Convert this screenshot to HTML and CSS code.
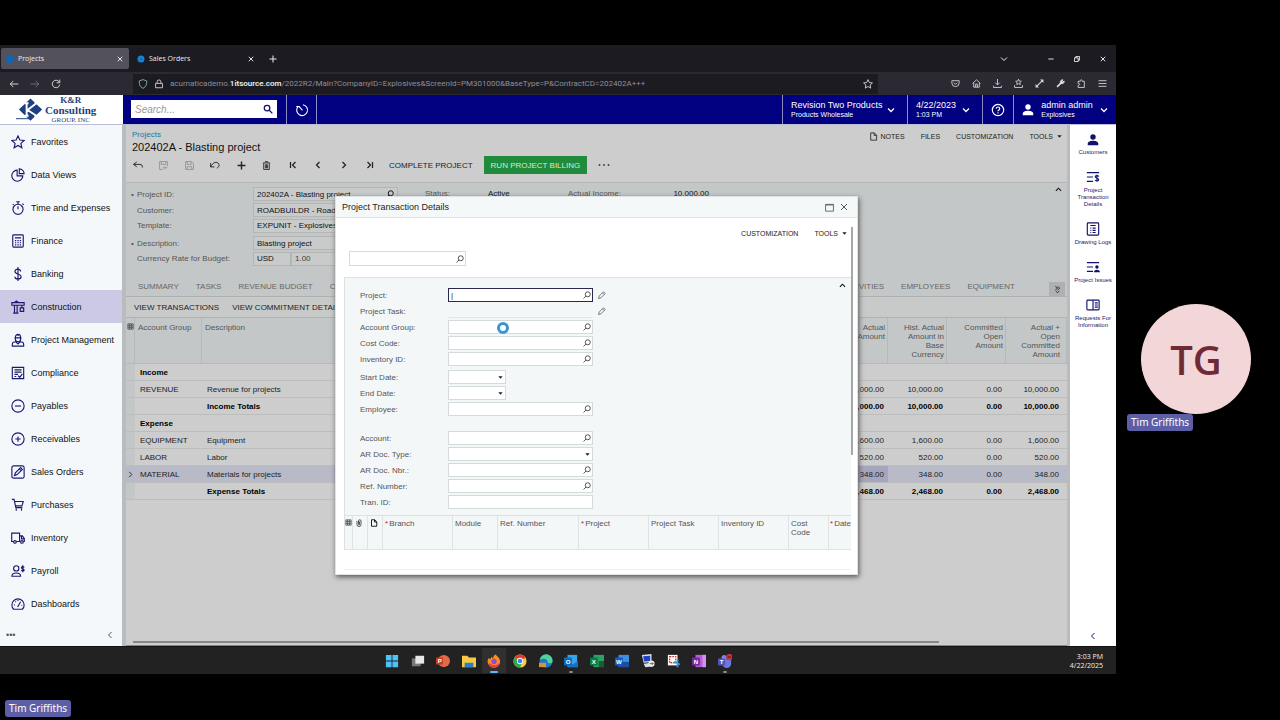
FILE: index.html
```html
<!DOCTYPE html>
<html lang="en">
<head>
<meta charset="utf-8">
<title>Project Transaction Details</title>
<link rel="stylesheet" href="styles.css">
</head>
<body>
<svg class="sprite" aria-hidden="true">
  <symbol id="chev-down" viewBox="0 0 16 16"><path d="M2 5l6 6 6-6"/></symbol>
  <symbol id="chev-up" viewBox="0 0 16 16"><path d="M2 11l6-6 6 6"/></symbol>
  <symbol id="chev-left" viewBox="0 0 16 16"><path d="M11 2L5 8l6 6"/></symbol>
  <symbol id="chev-right" viewBox="0 0 16 16"><path d="M5 2l6 6-6 6"/></symbol>
  <symbol id="first" viewBox="0 0 16 16"><path d="M3 2v12M13 2L7 8l6 6"/></symbol>
  <symbol id="last" viewBox="0 0 16 16"><path d="M13 2v12M3 2l6 6-6 6"/></symbol>
  <symbol id="close" viewBox="0 0 16 16"><path d="M2 2l12 12M14 2L2 14"/></symbol>
  <symbol id="plus" viewBox="0 0 16 16"><path d="M8 1v14M1 8h14"/></symbol>
  <symbol id="lookup" viewBox="0 0 16 16"><circle cx="9.500" cy="6.500" r="5"/><path d="M6 10l-5 5"/></symbol>
  <symbol id="pencil" viewBox="0 0 16 16"><path d="M1 15l1.500-5L11 1.500 14.500 5 6 13.500zM9 3.500L12.500 7"/></symbol>
  <symbol id="caret" viewBox="0 0 16 16"><path d="M3 5h10l-5 6z" fill="currentColor" stroke="none"/></symbol>
  <symbol id="person" viewBox="0 0 16 16"><circle cx="8" cy="4" r="3.600" fill="currentColor" stroke="none"/><path d="M1 15v-2c0-3 4-4 7-4s7 1 7 4v2z" fill="currentColor" stroke="none"/></symbol>
  <symbol id="page" viewBox="0 0 16 16"><path d="M3 1.500h6.500L13.500 6v8.500H3zM9 1.500V6h4.500"/></symbol>
  <symbol id="grid" viewBox="0 0 16 16"><path d="M2 2h12v12H2zM2 6h12M2 10h12M6 2v12M10 2v12"/></symbol>
  <symbol id="clip" viewBox="0 0 16 16"><path d="M4 4v7a4 4 0 0 0 8 0V4a2.500 2.500 0 0 0-5 0v7a1 1 0 0 0 2 0V5"/></symbol>
  <symbol id="star" viewBox="0 0 16 16"><path d="M8 1l2.100 4.700 5 .5-3.800 3.400 1.100 5L8 12l-4.400 2.600 1.100-5L.9 6.200l5-.5z"/></symbol>
</svg>

<main class="call">
  <section class="desktop">
    <div class="tabstrip">
      <div class="tab tab-on"><svg class="fav"><circle cx="4" cy="4" r="4"/></svg><span>Projects</span><button aria-label="Close tab"><svg class="i i6"><use href="#close"/></svg></button></div>
      <div class="tab"><svg class="fav"><circle class="fav-ring" cx="4" cy="4" r="2"/></svg><span>Sales Orders</span><button aria-label="Close tab"><svg class="i i6"><use href="#close"/></svg></button></div>
      <button class="newtab" aria-label="New tab"><svg class="i i8"><use href="#plus"/></svg></button>
      <div class="winbtns">
        <button aria-label="List tabs"><svg class="i i8"><use href="#chev-down"/></svg></button>
        <button aria-label="Minimize"><svg class="i i6" viewBox="0 0 16 16"><path d="M1 8h14"/></svg></button>
        <button aria-label="Restore"><svg class="i i6" viewBox="0 0 16 16"><path d="M1 5h10v10H1zM5 5V1h10v10h-4"/></svg></button>
        <button aria-label="Close"><svg class="i i6"><use href="#close"/></svg></button>
      </div>
    </div>

    <div class="navbar">
      <div class="navleft">
        <button aria-label="Back"><svg class="i i10" viewBox="0 0 16 16"><path d="M15 8H2M7 3L2 8l5 5"/></svg></button>
        <button class="dim" aria-label="Forward"><svg class="i i10" viewBox="0 0 16 16"><path d="M1 8h13M9 3l5 5-5 5"/></svg></button>
        <button aria-label="Reload"><svg class="i i10" viewBox="0 0 16 16"><path d="M13 4.500A6 6 0 1 0 14 9M14 1v5H9"/></svg></button>
      </div>
      <div class="url">
        <svg class="i i10 shield" viewBox="0 0 16 16"><path d="M8 1l6 2c0 6-1 9.500-6 12C3 12.500 2 9 2 3z"/></svg>
        <svg class="i i10" viewBox="0 0 16 16"><path d="M2.500 7h11v7h-11zM5 7V4.500a3 3 0 0 1 6 0V7"/></svg>
        <span>acumaticademo.<b>1itsource.com</b>/2022R2/Main?CompanyID=Explosives&amp;ScreenId=PM301000&amp;BaseType=P&amp;ContractCD=202402A+++</span>
        <svg class="i i10 urlstar"><use href="#star"/></svg>
      </div>
      <div class="navright">
        <button aria-label="Pocket"><svg class="i i9" viewBox="0 0 16 16"><path d="M1.500 3h13v4a6.500 6.500 0 0 1-13 0zM5 6.500l3 3 3-3"/></svg></button>
        <button aria-label="Home"><svg class="i i9" viewBox="0 0 16 16"><path d="M1 8l7-6.500L15 8M3 7v7.500h10V7M6.500 14.500V9h3v5.500"/></svg></button>
        <button aria-label="Downloads"><svg class="i i9" viewBox="0 0 16 16"><path d="M8 0v10M4 6.500l4 4 4-4M1 12v3h14v-3"/></svg></button>
        <button aria-label="Bookmarks"><svg class="i i9" viewBox="0 0 16 16"><path d="M8 .5l1.500 3.200 3.500.4-2.600 2.300.7 3.400L8 8.200 4.900 9.800l.7-3.400L3 4.100l3.500-.4zM1 11v4h14v-4"/></svg></button>
        <button aria-label="Expand"><svg class="i i9" viewBox="0 0 16 16"><path d="M3 13L13 3" stroke-width="2"/><path d="M9 1h6v6zM1 9v6h6z" fill="currentColor" stroke="none"/></svg></button>
        <button aria-label="Tools"><svg class="i i9" viewBox="0 0 16 16"><path d="M2 14l7-7" stroke-width="3"/><path d="M8 7a4 4 0 0 1 4.500-5.500L10.500 4l1.500 1.500L14.500 3.500A4 4 0 0 1 9 8z" fill="currentColor"/></svg></button>
        <button aria-label="Extensions"><svg class="i i9" viewBox="0 0 16 16"><path d="M2 4h4c-1-3.500 4-3.500 3 0h4v11H2v-4c3.500 1 3.500-4 0-3z"/></svg></button>
        <button aria-label="Menu"><svg class="i i9" viewBox="0 0 16 16"><path d="M1 3h14M1 8h14M1 13h14"/></svg></button>
      </div>
    </div>

    <header class="apphead">
      <div class="logo">
        <svg class="logomark" viewBox="0 0 30 24"><path d="M15 0l12 11.500L15 23 3 11.500z" fill="#1f3f80"/><path d="M0 21h16" stroke="#1f3f80" fill="none"/><path d="M11 5v13M9 5h4M9 18h4M21 5l-9 7 9 6M19 5h4M19 18h4" stroke="#fff" stroke-width="2" fill="none"/></svg>
        <div class="logotext"><b class="kr">K&amp;R</b><b>Consulting</b><small>GROUP, INC</small></div>
      </div>
      <label class="search"><input type="text" placeholder="Search..." aria-label="Search"><svg class="i i10" viewBox="0 0 16 16"><circle cx="6.500" cy="6.500" r="4.500"/><path d="M10 10l5 5"/></svg></label>
      <button class="recent" aria-label="Recent"><svg class="i i14" viewBox="0 0 16 16"><path d="M9 2a6.200 6.200 0 1 1-5.500 2M8.500 8.500L5 4.500M1.500 4h4"/></svg></button>
      <span class="grow"></span>
      <button class="hb hb-company"><span><em>Revision Two Products</em><small>Products Wholesale</small></span><svg class="i i8"><use href="#chev-down"/></svg></button>
      <button class="hb hb-date"><span><em>4/22/2023</em><small>1:03 PM</small></span><svg class="i i8"><use href="#chev-down"/></svg></button>
      <button class="hb hb-help" aria-label="Help"><svg class="i i14" viewBox="0 0 16 16"><circle cx="8" cy="8" r="6.500"/><path d="M6 6.500c0-2.800 4-2.500 4 0C10 8 8 8 8 9.500M8 10.500V12"/></svg></button>
      <button class="hb hb-user"><svg class="i i12"><use href="#person"/></svg><span><em>admin admin</em><small>Explosives</small></span><svg class="i i8"><use href="#chev-down"/></svg></button>
    </header>

    <div class="appbody">
      <nav class="side">
        <a href="#"><svg class="i i14"><use href="#star"/></svg>Favorites</a>
        <a href="#"><svg class="i i14" viewBox="0 0 16 16"><path d="M7 2.500A6.300 6.300 0 1 0 13.500 9H7zM9.500 1v5.500H15A5.500 5.500 0 0 0 9.500 1z"/></svg>Data Views</a>
        <a href="#"><svg class="i i14" viewBox="0 0 16 16"><circle cx="8" cy="9.500" r="5.800"/><path d="M8 9.500V6M6 .8h4M8 1v3M13 3l1.500 1.500M2 4.500L3 3.500"/></svg>Time and Expenses</a>
        <a href="#"><svg class="i i14" viewBox="0 0 16 16"><rect x="2" y="1" width="12" height="14" rx="1"/><path d="M4.500 4.500h7M4.500 7.500h1.500M7.300 7.500h1.500M10 7.500h1.500M4.500 10h1.500M7.300 10h1.500M10 10h1.500M4.500 12.500h1.500M7.300 12.500h1.500M10 12.500h1.500"/></svg>Finance</a>
        <a href="#"><svg class="i i14" viewBox="0 0 16 16"><path d="M11 5c0-3.500-6.500-3.500-6.500 0 0 3.500 7 2.500 7 6s-7 3.500-7 0M8 0v16"/></svg>Banking</a>
        <a href="#" class="on"><svg class="i i14" viewBox="0 0 16 16"><path d="M1 3h14v3H1zM4 6v9M7 6v9M2.500 15h6M4 3l2-2 3 2M12.500 6v3M10.500 9h4v4h-4z"/></svg>Construction</a>
        <a href="#"><svg class="i i14" viewBox="0 0 16 16"><path d="M4 5.500h8M5 5a3 3.500 0 0 1 6 0v2a3 3 0 0 1-6 0zM1.500 15v-2c0-2 2-3 4-3l2.500 2.500L10.500 10c2 0 4 1 4 3v2zM8 1v2.500"/></svg>Project Management</a>
        <a href="#"><svg class="i i14" viewBox="0 0 16 16"><path d="M1.500 1.500h13v13h-13zM4 4.500h8M4 7h8M4 9.500h4M4 12h2M8 11l2 2 3-4"/></svg>Compliance</a>
        <a href="#"><svg class="i i14" viewBox="0 0 16 16"><circle cx="8" cy="8" r="7"/><path d="M4.500 8h7"/></svg>Payables</a>
        <a href="#"><svg class="i i14" viewBox="0 0 16 16"><circle cx="8" cy="8" r="7"/><path d="M5 8h6M8 5v6"/></svg>Receivables</a>
        <a href="#"><svg class="i i14" viewBox="0 0 16 16"><rect x="1" y="1" width="14" height="14" rx="2"/><path d="M4 12l1-3 6-6 2 2-6 6zM9.500 4.500l2 2"/></svg>Sales Orders</a>
        <a href="#"><svg class="i i14" viewBox="0 0 16 16"><path d="M1 1.500h2.500L5.500 11H13M4 4h10l-1.500 5H5M6 12v2.500M12 12v2.500"/></svg>Purchases</a>
        <a href="#"><svg class="i i14" viewBox="0 0 16 16"><path d="M3 12H.8V2.500h9V12H6M9.800 5.500H13l2.200 3V12H14M9.800 12h1.200M12 6v3h3"/><circle cx="4.500" cy="12.500" r="1.500"/><circle cx="12.500" cy="12.500" r="1.500"/></svg>Inventory</a>
        <a href="#"><svg class="i i14" viewBox="0 0 16 16"><circle cx="6" cy="5" r="3"/><path d="M1 14c0-5 10-5 10 0zM15 4c-.5-1.500-3-1.200-3 .3 0 1.600 3 .9 3 2.500 0 1.500-2.700 1.600-3.200.1M13.500 1.500v8"/></svg>Payroll</a>
        <a href="#"><svg class="i i14" viewBox="0 0 16 16"><path d="M3 14a7 7 0 1 1 10 0zM7.500 11.500L11 5.500M3.500 9h1M5 5l.8.8M12 9.500h.8M8 3.500v1"/></svg>Dashboards</a>
        <div class="sidefoot"><button aria-label="More">•••</button><button aria-label="Collapse menu"><svg class="i i8"><use href="#chev-left"/></svg></button></div>
      </nav>

      <section class="main">
        <div class="titlebar">
          <div><a href="#">Projects</a><h1>202402A - Blasting project</h1></div>
          <div class="toplinks"><button><svg class="i i9"><use href="#page"/></svg>NOTES</button><button>FILES</button><button>CUSTOMIZATION</button><button>TOOLS<svg class="i i7"><use href="#caret"/></svg></button></div>
        </div>
        <div class="toolbar">
          <div class="tools">
            <button aria-label="Back"><svg class="i i10" viewBox="0 0 16 16"><path d="M6 3L1 7l5 4M1 7h10c3 0 4 1.500 4 5"/></svg></button>
            <button class="off" aria-label="Save and close"><svg class="i i9" viewBox="0 0 16 16"><path d="M7 15H1V1h14v8M4 1v5h8V1M8 12h7M11 9l-3 3 3 3"/></svg></button>
            <button class="off" aria-label="Save"><svg class="i i9" viewBox="0 0 16 16"><path d="M1 1h11l3 3v11H1zM4 1v5h7V1M4 15v-5h8v5"/></svg></button>
            <button aria-label="Undo"><svg class="i i10" viewBox="0 0 16 16"><path d="M1 5v6h6M1 11C4 5 9 2 13 5c3 3 1 7-2 8"/></svg></button>
            <button aria-label="Add"><svg class="i i9 bold"><use href="#plus"/></svg></button>
            <button aria-label="Delete"><svg class="i i9" viewBox="0 0 16 16"><path d="M1.500 3.500h13M6 3V1h4v2M3 4v11h10V4M6 6v7M8 6v7M10 6v7"/></svg></button>
            <button aria-label="First"><svg class="i i8 bold"><use href="#first"/></svg></button>
            <button aria-label="Previous"><svg class="i i8 bold"><use href="#chev-left"/></svg></button>
            <button aria-label="Next"><svg class="i i8 bold"><use href="#chev-right"/></svg></button>
            <button aria-label="Last"><svg class="i i8 bold"><use href="#last"/></svg></button>
          </div>
          <button>COMPLETE PROJECT</button>
          <button class="go">RUN PROJECT BILLING</button>
          <button aria-label="More actions"><svg class="i i12" viewBox="0 0 16 16"><path d="M1 8h2M7 8h2M13 8h2" stroke-width="2"/></svg></button>
        </div>

        <div class="panel">
          <div class="pform">
            <label class="req" for="f1">Project ID:</label><span class="fld"><input id="f1" value="202402A - Blasting project"><svg class="i i8"><use href="#lookup"/></svg></span>
            <label for="f2">Customer:</label><span class="fld"><input id="f2" value="ROADBUILDR - Road Builders"></span>
            <label for="f3">Template:</label><span class="fld"><input id="f3" value="EXPUNIT - Explosives Unit"></span>
            <label class="req gap" for="f4">Description:</label><span class="fld gap"><input id="f4" value="Blasting project"></span>
            <label for="f5">Currency Rate for Budget:</label><span class="pair"><span class="fld"><input id="f5" value="USD"></span><span class="fld"><input class="rate" value="1.00" aria-label="Rate"></span></span>
          </div>
          <dl class="stats"><dt>Status:</dt><dd>Active</dd><dt>Actual Income:</dt><dd class="num">10,000.00</dd></dl>
          <button class="fold" aria-label="Collapse"><svg class="i i7 bold"><use href="#chev-up"/></svg></button>
        </div>

        <div class="tabs">
          <button>SUMMARY</button><button>TASKS</button><button>REVENUE BUDGET</button><button>COST BUDGET</button>
          <span class="grow"></span>
          <button>ACTIVITIES</button><button>EMPLOYEES</button><button>EQUIPMENT</button>
          <button class="more" aria-label="More tabs"><svg class="i i7" viewBox="0 0 16 16"><path d="M3 1l5 4-5 4M8 1l5 4-5 4M4 12l4 3 4-3"/></svg></button>
        </div>
        <div class="subbar"><button>VIEW TRANSACTIONS</button><button>VIEW COMMITMENT DETAILS</button></div>

        <table class="data">
          <colgroup><col class="c-sel"><col class="c-grp"><col><col class="c-num"><col class="c-num"><col class="c-num"><col class="c-last"></colgroup>
          <thead><tr><th><svg class="i i7"><use href="#grid"/></svg></th><th>Account Group</th><th>Description</th><th>Actual Amount</th><th>Hist. Actual Amount in Base Currency</th><th>Committed Open Amount</th><th>Actual + Open Committed Amount</th></tr></thead>
          <tbody>
            <tr class="sum"><td></td><td>Income</td><td></td><td></td><td></td><td></td><td></td></tr>
            <tr><td></td><td>REVENUE</td><td>Revenue for projects</td><td>10,000.00</td><td>10,000.00</td><td>0.00</td><td>10,000.00</td></tr>
            <tr class="sum"><td></td><td></td><td>Income Totals</td><td>10,000.00</td><td>10,000.00</td><td>0.00</td><td>10,000.00</td></tr>
            <tr class="sum"><td></td><td>Expense</td><td></td><td></td><td></td><td></td><td></td></tr>
            <tr><td></td><td>EQUIPMENT</td><td>Equipment</td><td>1,600.00</td><td>1,600.00</td><td>0.00</td><td>1,600.00</td></tr>
            <tr><td></td><td>LABOR</td><td>Labor</td><td>520.00</td><td>520.00</td><td>0.00</td><td>520.00</td></tr>
            <tr class="cur"><td><svg class="i i7"><use href="#chev-right"/></svg></td><td>MATERIAL</td><td>Materials for projects</td><td class="act">348.00</td><td>348.00</td><td>0.00</td><td>348.00</td></tr>
            <tr class="sum"><td></td><td></td><td>Expense Totals</td><td>2,468.00</td><td>2,468.00</td><td>0.00</td><td>2,468.00</td></tr>
          </tbody>
        </table>
        <div class="hscroll"><i></i></div>

        <div class="modal" role="dialog" aria-label="Project Transaction Details">
          <div class="mhead"><h2>Project Transaction Details</h2><button aria-label="Maximize"><svg class="i i9" viewBox="0 0 16 16"><path d="M1 2.500h14v12H1zM1 3.500h14"/></svg></button><button aria-label="Close"><svg class="i i8"><use href="#close"/></svg></button></div>
          <div class="mbody">
            <div class="mcontent">
              <div class="toplinks mlinks"><button>CUSTOMIZATION</button><button>TOOLS<svg class="i i7"><use href="#caret"/></svg></button></div>
              <span class="mfld mfind"><input aria-label="Find"><svg class="i i8"><use href="#lookup"/></svg></span>
              <div class="mpanel">
                <div class="mform">
                  <label for="m1">Project:</label><span class="mfld focus"><input id="m1" value="|"><svg class="i i8"><use href="#lookup"/></svg></span><button aria-label="Edit project"><svg class="i i8"><use href="#pencil"/></svg></button>
                  <label for="m2">Project Task:</label><span class="mfld ro"><input id="m2" disabled></span><button aria-label="Edit task"><svg class="i i8"><use href="#pencil"/></svg></button>
                  <label for="m3">Account Group:</label><span class="mfld"><input id="m3"><svg class="i i8"><use href="#lookup"/></svg></span>
                  <label for="m4">Cost Code:</label><span class="mfld"><input id="m4"><svg class="i i8"><use href="#lookup"/></svg></span>
                  <label for="m5">Inventory ID:</label><span class="mfld"><input id="m5"><svg class="i i8"><use href="#lookup"/></svg></span>
                </div>
                <div class="mform">
                  <label for="m6">Start Date:</label><span class="mfld short"><input id="m6"><svg class="i i7"><use href="#caret"/></svg></span>
                  <label for="m7">End Date:</label><span class="mfld short"><input id="m7"><svg class="i i7"><use href="#caret"/></svg></span>
                  <label for="m8">Employee:</label><span class="mfld"><input id="m8"><svg class="i i8"><use href="#lookup"/></svg></span>
                </div>
                <div class="mform apart">
                  <label for="m9">Account:</label><span class="mfld"><input id="m9"><svg class="i i8"><use href="#lookup"/></svg></span>
                  <label for="m10">AR Doc. Type:</label><span class="mfld"><select id="m10"><option></option></select><svg class="i i7"><use href="#caret"/></svg></span>
                  <label for="m11">AR Doc. Nbr.:</label><span class="mfld"><input id="m11"><svg class="i i8"><use href="#lookup"/></svg></span>
                  <label for="m12">Ref. Number:</label><span class="mfld"><input id="m12"><svg class="i i8"><use href="#lookup"/></svg></span>
                  <label for="m13">Tran. ID:</label><span class="mfld"><input id="m13"></span>
                </div>
                <button class="mfold" aria-label="Collapse"><svg class="i i7 bold"><use href="#chev-up"/></svg></button>
                <svg class="busy" viewBox="0 0 14 14"><circle cx="7" cy="7" r="4.500"/></svg>
              </div>
              <table class="mgrid">
                <colgroup><col class="g1"><col class="g2"><col class="g2"><col class="g3"><col class="g4"><col class="g5"><col class="g3"><col class="g3"><col class="g3"><col class="g6"><col></colgroup>
                <thead><tr><th><svg class="i i7"><use href="#grid"/></svg></th><th><svg class="i i8"><use href="#clip"/></svg></th><th><svg class="i i8 dark"><use href="#page"/></svg></th><th class="rq">Branch</th><th>Module</th><th>Ref. Number</th><th class="rq">Project</th><th>Project Task</th><th>Inventory ID</th><th>Cost Code</th><th class="rq">Date</th></tr></thead>
              </table>
            </div>
            <div class="mscroll"><i></i></div>
          </div>
        </div>
      </section>

      <aside class="rail">
        <a href="#"><svg class="i i12"><use href="#person"/></svg>Customers</a>
        <a href="#"><svg class="i i14" viewBox="0 0 16 16"><path d="M1 3h14M1 8h7M1 13h7M14.500 7.500c-.5-1.500-4-1.500-4 .3s4 1.400 4 3.200-3.500 2-4 .3M12.500 5.500v8"/></svg>Project Transaction Details</a>
        <a href="#"><svg class="i i14" viewBox="0 0 16 16"><rect x="1.500" y="1" width="13" height="14" rx="1"/><path d="M5 4h6M5 7h1M7.500 7H11M5 9.500h1M7.500 9.500H11M5 12h1M7.500 12H11"/></svg>Drawing Logs</a>
        <a href="#"><svg class="i i14" viewBox="0 0 16 16"><path d="M1 3h14M1 8h7M1 13h7"/><circle cx="12.500" cy="8" r="2" fill="currentColor" stroke="none"/><path d="M9 14c0-4 7-4 7 0z" fill="currentColor" stroke="none"/></svg>Project Issues</a>
        <a href="#"><svg class="i i14" viewBox="0 0 16 16"><rect x="1" y="2.500" width="14" height="11" rx="1"/><path d="M8 2.500v11M10 5.500h3.500M10 8h3.500M10 10.500h3.500"/></svg>Requests For Information</a>
        <button aria-label="Collapse panel"><svg class="i i8"><use href="#chev-left"/></svg></button>
      </aside>
    </div>

    <footer class="taskbar">
      <span></span>
      <div class="apps">
        <button aria-label="Start"><svg viewBox="0 0 16 16"><path d="M1 1h6.500v6.500H1zM8.500 1H15v6.500H8.500zM1 8.500h6.500V15H1zM8.500 8.500H15V15H8.500z" fill="#4cc2f5"/></svg></button>
        <button aria-label="Task view"><svg viewBox="0 0 16 16"><path d="M1 5h10v9H1z" fill="#777"/><path d="M5 2h10v9H5z" fill="#e8e8e8"/></svg></button>
        <button aria-label="PowerPoint"><svg viewBox="0 0 16 16"><circle cx="9" cy="8" r="7" fill="#e06a4a"/><rect y="4" width="8" height="8" rx="1" fill="#c43e1c"/><text x="2" y="10.500">P</text></svg></button>
        <button aria-label="Files"><svg viewBox="0 0 16 16"><path d="M0 2h6l2 2h8v11H0z" fill="#f6c945"/><path d="M3 10h10v5H3z" fill="#2a7fc9"/></svg></button>
        <button class="open" aria-label="Firefox"><svg viewBox="0 0 16 16"><path d="M8 15.500a7 7 0 0 1-6-11l2 1.500 1-3 2 2c0-2 1-4 3-4.500 1 2 5 3.500 5 8a7 7 0 0 1-7 7z" fill="#ff8a1e"/><path d="M2 10a6 6 0 0 0 12 0c-2 3-8 4-12 0z" fill="#f5315c"/><circle cx="8" cy="8.500" r="3" fill="#8a4fd8"/></svg></button>
        <button aria-label="Chrome"><svg viewBox="0 0 16 16"><circle cx="8" cy="8" r="7.500" fill="#fc3"/><path d="M8 8L1.500 4.200a7.500 7.500 0 0 1 13 0z" fill="#e33b2e"/><path d="M8 8L1.500 4.200A7.500 7.500 0 0 0 8 15.500L10 11z" fill="#2da94f"/><circle cx="8" cy="8" r="3.600" fill="#fff"/><circle cx="8" cy="8" r="2.700" fill="#3b82f0"/></svg></button>
        <button aria-label="Edge"><svg viewBox="0 0 16 16"><circle cx="8" cy="8" r="7.500" fill="#1c79c9"/><path d="M1 7a7.200 7.200 0 0 1 14.500 1c0 3-5 3.500-6 1 1-3-5-5-8.500-2z" fill="#4fd39a"/><rect y="10" width="8" height="5" fill="#d9913a"/></svg></button>
        <button class="run" aria-label="Outlook"><svg viewBox="0 0 16 16"><path d="M4 1h11v14H4z" fill="#35a5ea"/><path d="M5 8l5 4 6-4v7H5z" fill="#1a6fc4"/><rect y="4" width="9" height="9" rx="1" fill="#0f6cbd"/><text x="2" y="11">O</text></svg></button>
        <button aria-label="Excel"><svg viewBox="0 0 16 16"><path d="M4 1h12v14H4z" fill="#27a366"/><path d="M10 8h6v7h-6z" fill="#185c37"/><rect y="4" width="9" height="9" rx="1" fill="#107c41"/><text x="2" y="11">X</text></svg></button>
        <button aria-label="Word"><svg viewBox="0 0 16 16"><path d="M4 1h12v14H4z" fill="#3f8fe0"/><path d="M4 9h12v6H4z" fill="#1b4f9e"/><rect y="4" width="9" height="9" rx="1" fill="#185abd"/><text x="1" y="11">W</text></svg></button>
        <button aria-label="Remote desktop"><svg viewBox="0 0 16 16"><path d="M1 1l11-1v9L3 10zM3 11l9-1 2 4-9 1z" fill="#d9dee8"/><path d="M2.500 2.500L10.500 2v6l-7 .7z" fill="#1f3fc4"/><circle cx="12" cy="11" r="3.500" fill="#eee"/><path d="M10 11h4M12.500 9.500L14 11l-1.500 1.500" stroke="#555" fill="none"/></svg></button>
        <button aria-label="Snipping tool"><svg viewBox="0 0 16 16"><rect x="1" y="1" width="11" height="12" fill="#fff"/><rect x="3" y="3" width="7" height="7" fill="none" stroke="#d23a2e" stroke-dasharray="2 1" stroke-width="1.500"/><path d="M8 9l7 3M12 6v9" stroke="#3d9bd6" stroke-width="2"/></svg></button>
        <button aria-label="OneNote"><svg viewBox="0 0 16 16"><path d="M4 1h12v14H4z" fill="#b45fd6"/><path d="M12 1h4v14h-4z" fill="#d393ef"/><rect y="4" width="9" height="9" rx="1" fill="#7b2a9e"/><text x="2" y="11">N</text></svg></button>
        <button class="run" aria-label="Teams"><svg viewBox="0 0 16 16"><circle cx="7" cy="4" r="3" fill="#7b83eb"/><path d="M5 6h10v5a5 5 0 0 1-10 0z" fill="#6f76dd"/><circle cx="13" cy="3.500" r="3.500" fill="#d13438"/><path d="M11 3.500h4" stroke="#7c1518" stroke-width="1.500"/><rect y="5" width="8" height="8" rx="1" fill="#4b53bc"/><text x="2" y="11.500">T</text></svg></button>
      </div>
      <time>3:03 PM<br>4/22/2025</time>
    </footer>
  </section>

  <aside class="people">
    <div class="avatar">TG</div>
    <span class="name">Tim Griffiths</span>
  </aside>

  <span class="name self">Tim Griffiths</span>
</main>
</body>
</html>
```
FILE: styles.css
```css
* { box-sizing: border-box; }
body { margin: 0; background: #000; font-family: "Liberation Sans", Arial, sans-serif; font-size: 8px; color: #222; }
button { border: 0; padding: 0; background: none; color: inherit; font: inherit; display: inline-flex; align-items: center; justify-content: center; white-space: nowrap; }
input, select { border: 0; padding: 0; margin: 0; background: none; font: inherit; color: inherit; min-width: 0; outline: 0; appearance: none; }
a { color: inherit; text-decoration: none; }
h1, h2, dl, dd { margin: 0; font-weight: normal; }
em { font-style: normal; }
.grow { flex: 1; }
.sprite { position: absolute; width: 0; height: 0; }

.i { flex: none; fill: none; stroke: currentColor; stroke-width: 1.5; display: block; }
.i6 { width: 6px; height: 6px; stroke-width: 2.5; }
.i7 { width: 7px; height: 7px; stroke-width: 2; }
.i8 { width: 8px; height: 8px; stroke-width: 2; }
.i9 { width: 9px; height: 9px; }
.i10 { width: 10px; height: 10px; }
.i12 { width: 12px; height: 12px; }
.i14 { width: 14px; height: 14px; stroke-width: 1.3; }
.bold { stroke-width: 2.5; }

.call { min-height: 100vh; display: grid; grid-template: 45px 1fr 46px / 1fr 164px; }
.desktop { grid-area: 2 / 1; display: flex; flex-direction: column; min-width: 0; }

/* Browser chrome */
.tabstrip, .taskbar time { font-family: "Open Sans", sans-serif; }
.tabstrip { height: 27px; background: #1c1b22; color: #eee; display: flex; align-items: center; font-size: 7px; padding-left: 1px; }
.tab { width: 128px; height: 21px; border-radius: 2px; display: flex; align-items: center; gap: 4px; padding: 0 6px 0 5px; margin-right: 3px; }
.tab span { flex: 1; }
.tab-on { background: #52515c; }
.fav { width: 8px; height: 8px; fill: #0d67b8; }
.fav-ring { fill: none; stroke: #1383d8; stroke-width: 3; }
.newtab { margin-left: 6px; }
.winbtns { margin-left: auto; display: flex; gap: 20px; padding-right: 10px; }
.winbtns button:first-child { margin-right: 20px; }
.navbar { height: 23px; background: #2b2a33; color: #ddd; display: flex; align-items: center; }
.navleft { width: 133px; display: flex; gap: 11px; padding-left: 9px; }
.dim { opacity: .4; }
.url { flex: 1; height: 20px; max-width: 745px; background: #1c1b22; display: flex; align-items: center; gap: 6px; padding: 0 5px; font-family: Roboto, sans-serif; font-size: 8px; color: #8f8e96; }
.url b { color: #eee; font-weight: 600; }
.url .i { color: #ccc; }
.url .shield { color: #8aa; }
.url .urlstar { margin-left: auto; }
.navright { margin-left: auto; display: flex; gap: 12px; padding-right: 9px; }

/* Application header */
.apphead { height: 30px; background: #000080; color: #fff; display: flex; align-items: stretch; border-bottom: 1px solid #b9bdd8; }
.logo { width: 123px; background: #fff; display: flex; align-items: center; padding-left: 16px; color: #1f3f80; }
.logomark { width: 29px; height: 24px; }
.logotext { display: flex; flex-direction: column; align-items: center; font-family: "Liberation Serif", serif; font-size: 11px; line-height: 11px; }
.logotext .kr { font-size: 9px; line-height: 9px; }
.logotext small { font-size: 7px; line-height: 8px; }
.search { width: 146px; height: 18px; margin: 5px 9px 0 8px; background: #fff; color: #10106a; display: flex; align-items: center; padding: 0 4px; }
.search input { flex: 1; font-size: 10px; }
.search input::placeholder { color: #999; font-style: italic; }
.search .i { stroke-width: 2; }
.recent { width: 31px; border: solid #8d8dc8; border-width: 0 1px; }
.hb { border-left: 1px solid #8d8dc8; padding: 0 12px 0 8px; justify-content: space-between; text-align: left; }
.hb em { display: block; font-size: 9px; line-height: 10px; }
.hb small { display: block; font-size: 7px; line-height: 9px; }
.hb-company { width: 125px; }
.hb-date { width: 75px; }
.hb-help { width: 31px; padding: 0; justify-content: center; }
.hb-user { width: 103px; padding: 0 8px; }
.hb .i8 { stroke-width: 2.5; }

.appbody { flex: 1; display: flex; min-height: 0; }
.side { width: 122px; background: #f5f8fa; display: flex; flex-direction: column; font-size: 9px; color: #111; }
.side a { height: 33px; display: flex; align-items: center; gap: 6px; padding-left: 11px; white-space: nowrap; }
.side .on { background: #cbc9e5; }
.side a .i { color: #1a1a70; }
.sidefoot { flex: 1; display: flex; justify-content: space-between; align-items: center; padding: 4px 8px 0 6px; color: #555; }

/* Project screen, dimmed behind the dialog */
.main { flex: 1; min-width: 0; position: relative; display: flex; flex-direction: column; background: #cdcdcd; border: solid #b8bcbe; border-width: 0 3px 0 4px; }
.titlebar { display: flex; justify-content: space-between; padding: 5px 4px 0 6px; }
.titlebar a { display: block; color: #1878a8; font-size: 8px; line-height: 10px; }
h1 { font-size: 11px; line-height: 14px; color: #111; }
.toplinks { display: flex; align-items: center; gap: 16px; font-size: 7px; height: 13px; }
.toplinks button { gap: 3px; }
.toolbar { display: flex; align-items: center; gap: 11px; height: 22px; padding: 0 4px; color: #222; }
.tools { display: flex; justify-content: space-between; width: 248px; }
.tools button { width: 16px; }
.off { opacity: .35; }
.toolbar .go { background: #1f8b3b; color: #d8e8d8; height: 18px; padding: 0 7px; }
.panel { height: 95px; margin-top: 6px; border-top: 1px solid #b6b8b8; background: #c4c7c7; padding-top: 3px; display: flex; align-items: flex-start; color: #555; }
.pform { display: grid; grid-template-columns: 116px 145px; grid-template-rows: 16px 16px 15px 18px 15px; align-items: center; padding-left: 11px; }
.pform label { position: relative; white-space: nowrap; }
.req::before { content: "•"; position: absolute; left: -6px; }
.gap { margin-top: 2px; }
.fld { height: 14px; display: flex; align-items: center; border: 1px solid #b4b6b6; background: #c9caca; padding: 0 3px; color: #111; }
.fld input { flex: 1; width: 100%; }
.pair { display: grid; grid-template-columns: 38px 1fr; }
.fld .rate { color: #444; }
.stats { display: grid; grid-template-columns: 63px 80px 83px 58px; padding-left: 27px; line-height: 15px; }
.stats dd { color: #111; }
.num { text-align: right; }
.fold { margin: 0 5px 0 auto; color: #111; }
.tabs { display: flex; align-items: center; gap: 17px; height: 20px; padding: 0 2px 0 12px; border-bottom: 1px solid #aeb1b1; background: #c4c7c7; color: #666; }
.tabs .more { width: 16px; height: 14px; background: #aeb0b2; color: #222; margin-left: 17px; align-self: flex-end; }
.subbar { display: flex; gap: 13px; height: 21px; padding-left: 8px; background: #c8caca; border-bottom: 1px solid #b0b2b2; color: #222; }
.data { width: 100%; table-layout: fixed; border-collapse: separate; border-spacing: 0; color: #1c1c1c; }
.c-sel { width: 9px; } .c-grp { width: 67px; } .c-num { width: 59px; } .c-last { width: 61px; }
.data th { height: 46px; padding: 5px 2px 0 3px; vertical-align: top; text-align: left; font-weight: normal; color: #555; line-height: 9px; background: #c3c7c7; border: solid #b6b9b9; border-width: 0 1px 1px 0; }
.data th:first-child, .data td:first-child { padding: 5px 0 0 1px; vertical-align: top; background: #c3c7c7; }
.data td { height: 17px; padding: 0 4px 0 5px; border-bottom: 1px solid #bcbebe; white-space: nowrap; }
.data th:nth-child(n+4) { text-align: right; padding-left: 15px; }
.data td:nth-child(n+4) { text-align: right; }
.data td:last-child { padding-right: 8px; }
.data th:last-child { padding-right: 6px; }
.sum td { font-weight: bold; color: #000; }
.data .cur td { background: #b9bac8; }
.data .cur .act { background: #a5a6bd; }
.hscroll { margin-top: auto; padding: 0 128px 2px 7px; border-bottom: 1px solid #888; }
.hscroll i { display: block; height: 2px; background: #85888a; }

/* Dialog */
.modal { position: absolute; left: 209px; right: 209px; top: 71px; height: 379px; background: #fff; border: 1px solid #dfe3e5; box-shadow: 1px 2px 5px #555; display: flex; flex-direction: column; color: #555; }
.mhead { height: 21px; background: #f5f8f9; border-bottom: 1px solid #dde1e3; display: flex; align-items: center; gap: 6px; padding: 0 9px 0 6px; }
h2 { flex: 1; font-size: 9px; color: #222; }
.mbody { flex: 1; display: flex; padding: 9px 4px 4px 8px; }
.mcontent { flex: 1; min-width: 0; display: flex; flex-direction: column; border-bottom: 1px solid #eceff0; }
.mlinks { height: 12px; justify-content: flex-end; padding: 0 3px; color: #222; }
.mfld { height: 14px; border: 1px solid #d5dadc; background: #fff; display: flex; align-items: center; padding: 0 1px 0 2px; color: #222; }
.mfld .i8, .mform button .i8 { stroke-width: 1.5; }
.mfld input, .mfld select { flex: 1; width: 100%; }
.mfind { width: 117px; margin: 12px 0 11px 5px; height: 15px; }
.mpanel { position: relative; background: #f4f7f8; border: 1px solid #dde1e3; border-right: 0; padding: 9px 0 4px 15px; height: 239px; }
.mform { display: grid; grid-template-columns: 88px 145px 18px; grid-auto-rows: 16px; align-items: center; margin-bottom: 2px; }
.mform label { grid-column: 1; }
.mform.apart { margin-top: 13px; }
.focus { border-color: #2b2850; }
.ro { border-color: transparent transparent #e2e6e8; background: none; }
.short { width: 58px; }
.mfold { position: absolute; right: 5px; top: 4px; color: #111; }
.busy { position: absolute; left: 151px; top: 43px; width: 14px; height: 14px; fill: #fff; stroke: #3797d3; stroke-width: 3; }
.mgrid { width: 100%; table-layout: fixed; border-collapse: separate; border-spacing: 0; border-left: 1px solid #dde1e3; }
.mgrid th { height: 34px; padding: 3px 2px; vertical-align: top; text-align: left; font-weight: normal; line-height: 9px; background: #f4f7f8; border: solid #dfe3e5; border-width: 0 1px 1px 0; color: #555; white-space: nowrap; }
.mgrid th:nth-child(10) { white-space: normal; }
.mgrid th:first-child { padding-left: 0; }
.mgrid th:last-child { border-right: 0; padding-right: 0; padding-left: 1px; }
.g1 { width: 8px; } .g2 { width: 15px; } .g3 { width: 70px; } .g4 { width: 45px; } .g5 { width: 81px; } .g6 { width: 40px; }
.rq::before { content: "*"; color: #c22; margin-right: 1px; }
.dark { color: #222; }
.mscroll { width: 2px; }
.mscroll i { display: block; height: 228px; background: #a5a7a9; }

/* Side panel */
.rail { width: 46px; background: #fff; display: flex; flex-direction: column; align-items: center; padding-top: 9px; font-size: 6px; line-height: 7px; text-align: center; color: #22226a; gap: 14px; }
.rail a { display: flex; flex-direction: column; align-items: center; gap: 3px; }
.rail .i { color: #12126a; }
.rail button { margin: auto 0 6px; }

.taskbar { height: 28px; background: #222; border-top: 1px solid #111; display: grid; grid-template-columns: 380px 357px 1fr; align-items: center; color: #eee; }
.apps { display: flex; align-items: center; justify-content: space-between; }
.apps button { width: 24px; height: 25px; position: relative; }
.apps svg { width: 14px; height: 14px; }
.apps text { font: bold 7px "Liberation Sans", sans-serif; fill: #fff; }
.open { background: #303030; }
.open::after, .run::after { content: ""; position: absolute; bottom: 0; left: 8px; width: 8px; height: 2px; border-radius: 1px; background: #4cc2f5; }
.run::after { left: 10px; width: 4px; background: #888; }
.taskbar time { font-size: 7px; line-height: 9px; text-align: right; padding-right: 13px; }

/* Call participants */
.people { grid-area: 2 / 2; display: flex; flex-direction: column; align-items: center; padding-top: 259px; }
.avatar { width: 110px; height: 110px; border-radius: 50%; background: #f3d6d8; color: #6e2b36; display: flex; align-items: center; justify-content: center; font: 600 40px "Open Sans", sans-serif; margin-left: -4px; }
.name { align-self: flex-start; margin-left: 11px; height: 17px; padding: 0 4px; border-radius: 3px; background: #5d5fa6; color: #fff; font: 10px/17px "Noto Sans", sans-serif; }
.self { grid-area: 3 / 1; justify-self: start; align-self: end; margin: 0 0 3px 5px; }
```
